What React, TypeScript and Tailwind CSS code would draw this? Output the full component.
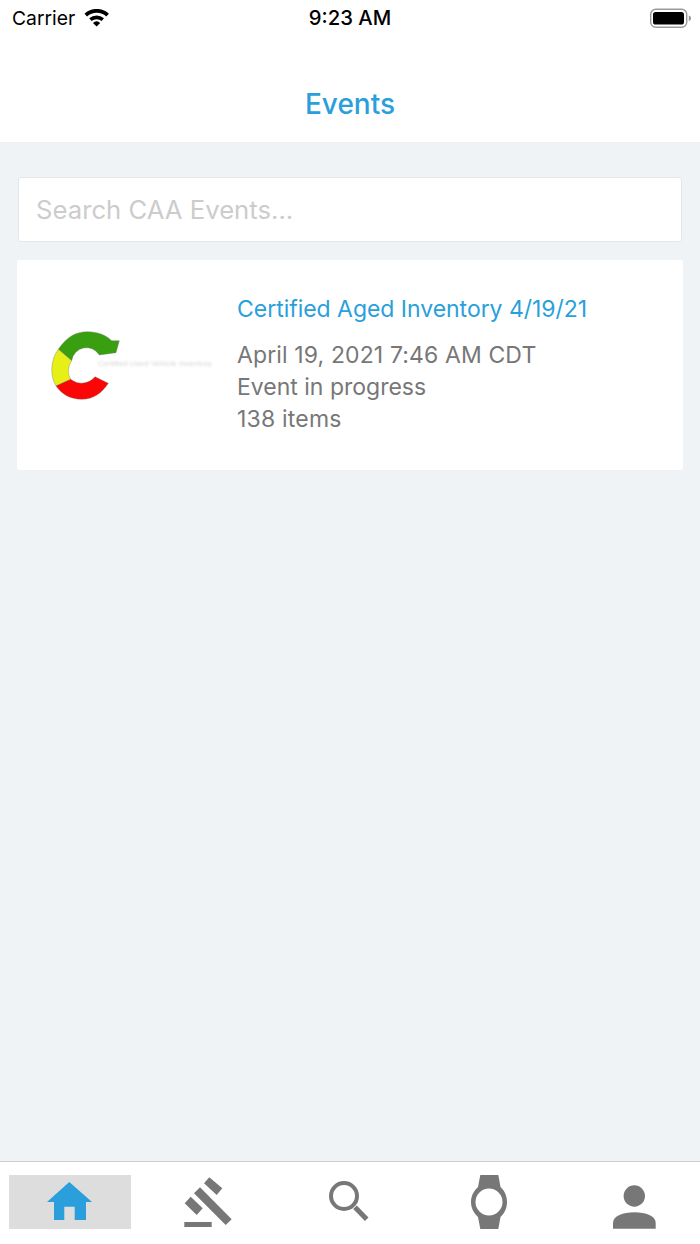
import React from "react";

const Wifi = () => (
  <svg width="26" height="18" viewBox="85 8.5 26 18" className="ml-[9px]">
    <path d="M86.8 14.6 A16 16 0 0 1 108.6 14.6" fill="none" stroke="#000" strokeWidth="3.8" />
    <path d="M91.4 19.2 A9.4 9.4 0 0 1 103.8 19.2" fill="none" stroke="#000" strokeWidth="3.6" />
    <path d="M94 22.4 A5 5 0 0 1 101.2 22.4 L97.6 26 Z" fill="#000" />
  </svg>
);

const Battery = () => (
  <svg width="42" height="20" viewBox="650 6 42 20">
    <rect x="650.7" y="7.2" width="36" height="18" rx="5" fill="none" stroke="#9a9a9a" strokeWidth="1.4" />
    <rect x="653" y="10" width="31" height="12.6" rx="2.6" fill="#000" />
    <path d="M688.8 13.5 C690.4 14 691 15 691 16.3 C691 17.6 690.4 18.6 688.8 19 Z" fill="#9a9a9a" />
  </svg>
);

const Logo = () => (
  <div className="relative ml-[13px] h-[110px] w-[200px] shrink-0">
    <svg width="200" height="110" viewBox="0 0 600 330">
      <path d="M85 118 C112 78 140 65 172 65 C205 65 228 76 245 92 L268 92 L258 128 L208 135 A45 45 0 0 0 125 152 Z" fill="#3a9f10" stroke="#6b6b6b" strokeWidth="1" />
      <path d="M85 118 L125 152 A52 52 0 0 0 122 208 L78 228 C60 200 60 150 85 118 Z" fill="#e6f016" stroke="#6b6b6b" strokeWidth="1" />
      <path d="M78 228 L122 208 A52 52 0 0 0 195 200 L235 220 C215 250 190 268 155 268 C120 268 95 252 78 228 Z" fill="#fb0606" stroke="#6b6b6b" strokeWidth="1" />
    </svg>
    <span className="absolute left-[68px] top-[49px] whitespace-nowrap text-[8px] leading-[10px] text-[#d6d6d6] blur-[0.8px] [font-family:'Liberation_Sans',sans-serif]">
      Certified Used Vehicle Inventory
    </span>
  </div>
);

const Home = () => (
  <svg width="60" height="54" viewBox="40 1175 60 54">
    <path d="M69.3 1182 L92 1202 H86 V1220 H74.7 V1206.7 H64.3 V1220 H54 V1202 H47 Z" fill="#2a9fdb" />
  </svg>
);

const Gavel = () => (
  <svg width="60" height="54" viewBox="180 1175 60 54">
    <g fill="#777777">
      <path d="M209.3 1177.3 L222.3 1188.3 L216.7 1195 L204 1183.3 Z" />
      <path d="M200 1187.3 L231.7 1219.3 L225.7 1225 L194 1193.3 Z" />
      <path d="M190.7 1196.7 L202.7 1208.3 L196.7 1215 L184.7 1203.3 Z" />
      <rect x="184.3" y="1222" width="27.4" height="5" />
    </g>
  </svg>
);

const Search = () => (
  <svg width="60" height="54" viewBox="320 1175 60 54">
    <circle cx="344" cy="1196" r="13" fill="none" stroke="#777777" strokeWidth="4" />
    <path d="M355 1207.3 L366.7 1219.3" stroke="#777777" strokeWidth="5" />
  </svg>
);

const Watch = () => (
  <svg width="60" height="54" viewBox="460 1175 60 54">
    <path
      fillRule="evenodd"
      fill="#777777"
      d="M480.3 1175 H498.3 L500.5 1187 C504.5 1190.5 507 1196 507 1202 C507 1208 504.5 1213.5 500.5 1217 L498.3 1229 H480.3 L478 1217 C474 1213.5 471 1208 471 1202 C471 1196 474 1190.5 478 1187 Z M489 1188.5 A13.5 13.5 0 1 0 489 1215.5 A13.5 13.5 0 1 0 489 1188.5 Z"
    />
  </svg>
);

const Person = () => (
  <svg width="60" height="54" viewBox="600 1175 60 54">
    <circle cx="634.3" cy="1196" r="10.7" fill="#777777" />
    <path d="M613 1228.7 V1223 C613 1216 623 1212.3 634.3 1212.3 C646 1212.3 655.7 1216 655.7 1223 V1228.7 Z" fill="#777777" />
  </svg>
);

export default function App() {
  return (
    <div className="flex h-[1244px] w-[700px] flex-col overflow-hidden bg-[#eff3f6] [font-family:Inter,'Liberation_Sans',sans-serif]">
      <header className="h-[142px] shrink-0 bg-white">
        <div className="relative flex h-[36px] items-center justify-between pl-[12px] pr-[8px]">
          <div className="flex items-center">
            <span className="text-[19.3px] leading-[24px] text-black">Carrier</span>
            <Wifi />
          </div>
          <span className="absolute left-0 right-0 text-center text-[20.3px] font-medium leading-[24px] text-black">9:23 AM</span>
          <Battery />
        </div>
        <h1 className="mt-[52px] text-center text-[28px] font-medium leading-[33px] text-[#2a9fdb]">Events</h1>
      </header>

      <main className="flex-1 px-[17px] pt-[35px]">
        <div className="mx-px h-[65px] rounded-[3px] border border-[#e4e7ea] bg-white">
          <input
            readOnly
            placeholder="Search CAA Events..."
            className="h-full w-full bg-transparent px-[17px] text-[25.7px] text-black outline-none placeholder:text-[#cccccc]"
          />
        </div>
        <section className="mt-[18px] flex h-[210px] items-center rounded-[2px] bg-white">
          <Logo />
          <div className="ml-[7px] -translate-y-[1px] text-[23px] leading-[32px] text-[#777777]">
            <div className="mb-[14px] text-[#2a9fdb] tracking-[-0.03px]">Certified Aged Inventory 4/19/21</div>
            <div className="tracking-[0.12px]">April 19, 2021 7:46 AM CDT</div>
            <div>Event in progress</div>
            <div className="tracking-[0.2px]">138 items</div>
          </div>
        </section>
      </main>

      <nav className="flex h-[83px] shrink-0 border-t border-[#cfcfcf] bg-white pt-[13px]">
        <div className="flex h-[54px] w-[140px] justify-center px-[9px]">
          <div className="flex h-full w-full justify-center bg-[#dddddd]">
            <Home />
          </div>
        </div>
        <div className="flex h-[54px] w-[140px] justify-center"><Gavel /></div>
        <div className="flex h-[54px] w-[140px] justify-center"><Search /></div>
        <div className="flex h-[54px] w-[140px] justify-center"><Watch /></div>
        <div className="flex h-[54px] w-[140px] justify-center"><Person /></div>
      </nav>
    </div>
  );
}
